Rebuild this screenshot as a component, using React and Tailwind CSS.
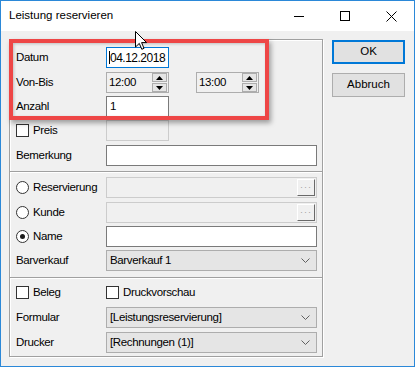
import React from 'react';

const Check = () => (
  <span className="block w-[13px] h-[13px] border border-[#333333] bg-white shrink-0" />
);

const Radio = ({ checked }) => (
  <span className="flex w-[13px] h-[13px] rounded-full border border-[#333333] bg-white items-center justify-center shrink-0">
    {checked && <span className="block w-[5px] h-[5px] rounded-full bg-[#1a1a1a]" />}
  </span>
);

const Chevron = () => (
  <svg width="9" height="5" viewBox="0 0 9 5" className="shrink-0">
    <path d="M0.5 0.5 L4.5 4.5 L8.5 0.5" stroke="#606060" fill="none" />
  </svg>
);

const Row = ({ label, children, className = '' }) => (
  <div className={`flex items-center h-[21px] ${className}`}>
    <div className="w-[90px] flex items-center shrink-0">{label}</div>
    {children}
  </div>
);

const Spinner = ({ value }) => (
  <div className="flex w-[63px] h-[21px] border border-[#adadad] bg-[#f0f0f0]">
    <div className="flex-1 flex items-center pl-[2px]">{value}</div>
    <div className="flex flex-col gap-[1px] w-[15px] mr-[1px]">
      <div className="h-[9px] border border-[#adadad] bg-[#e5e5e5] flex items-center justify-center">
        <svg width="7" height="4" viewBox="0 0 7 4"><path d="M3.5 0 L7 4 L0 4 Z" fill="#000" /></svg>
      </div>
      <div className="h-[9px] border border-[#adadad] bg-[#e5e5e5] flex items-center justify-center">
        <svg width="7" height="4" viewBox="0 0 7 4"><path d="M0 0 L7 0 L3.5 4 Z" fill="#000" /></svg>
      </div>
    </div>
  </div>
);

const Lookup = () => (
  <div className="flex items-center justify-end w-[211px] h-[21px] border border-[#cccccc] bg-[#f0f0f0]">
    <div className="w-[18px] h-[17px] mr-[1px] border border-t-white border-l-white border-b-[#696969] border-r-[#696969] bg-[#f0f0f0] flex items-center justify-center text-[#a0a0a0] text-[9px] tracking-[1px]">
      ···
    </div>
  </div>
);

const Select = ({ value }) => (
  <div className="flex items-center justify-between w-[211px] h-[21px] border border-[#adadad] bg-[#e5e5e5] pl-[3px] pr-[6px]">
    <span>{value}</span>
    <Chevron />
  </div>
);

export default function App() {
  return (
    <div className="relative w-[415px] h-[367px] border border-[#2b88d8] bg-[#f0f0f0] text-[11.5px] leading-none tracking-[-0.35px] text-black font-['Liberation_Sans',Arial,sans-serif] overflow-hidden">
      {/* Title bar */}
      <div className="flex items-center h-[30px] bg-white">
        <div className="flex-1 pl-[8px] text-[11.5px] tracking-normal">Leistung reservieren</div>
        <div className="flex">
          <div className="w-[46px] h-[30px] flex items-center justify-center">
            <div className="w-[10px] h-[1px] bg-black" />
          </div>
          <div className="w-[46px] h-[30px] flex items-center justify-center">
            <div className="w-[10px] h-[10px] border border-black" />
          </div>
          <div className="w-[46px] h-[30px] flex items-center justify-center">
            <svg width="11" height="11" viewBox="0 0 11 11">
              <path d="M0.5 0.5 L10.5 10.5 M10.5 0.5 L0.5 10.5" stroke="#000" strokeWidth="1" />
            </svg>
          </div>
        </div>
      </div>

      {/* Body */}
      <div className="flex">
        {/* Group box */}
        <div className="ml-[8px] mt-[8px] w-[314px] border border-[#a0a0a0] shadow-[inset_1px_1px_0_#ffffff,1px_1px_0_#ffffff] flex flex-col">
          <div className="pl-[6px] pt-[7px] pb-[5px]">
            <Row label="Datum">
              <div className="flex items-center w-[63px] h-[21px] border border-[#0078d7] bg-white pl-[2px]">
                <span className="block w-[1px] h-[13px] bg-black" />
                <span className="text-[12px] tracking-[-0.5px]">04.12.2018</span>
              </div>
            </Row>
            <Row label="Von-Bis" className="mt-[4px]">
              <Spinner value="12:00" />
              <div className="ml-[27px]">
                <Spinner value="13:00" />
              </div>
            </Row>
            <Row label="Anzahl" className="mt-[3px]">
              <div className="flex items-center w-[63px] h-[21px] border border-[#7a7a7a] bg-white pl-[3px]">1</div>
            </Row>
            <Row
              className="mt-[3px]"
              label={
                <>
                  <Check />
                  <span className="ml-[4px]">Preis</span>
                </>
              }
            >
              <div className="w-[63px] h-[21px] border border-[#cccccc] bg-[#f0f0f0]" />
            </Row>
            <Row label="Bemerkung" className="mt-[4px]">
              <div className="w-[211px] h-[21px] border border-[#7a7a7a] bg-white" />
            </Row>
          </div>

          <div className="h-[2px] border-t border-[#a0a0a0] bg-white" />

          <div className="pl-[6px] pt-[4px] pb-[6px]">
            <Row
              label={
                <>
                  <Radio />
                  <span className="ml-[4px]">Reservierung</span>
                </>
              }
            >
              <Lookup />
            </Row>
            <Row
              className="mt-[4px]"
              label={
                <>
                  <Radio />
                  <span className="ml-[4px]">Kunde</span>
                </>
              }
            >
              <Lookup />
            </Row>
            <Row
              className="mt-[3px]"
              label={
                <>
                  <Radio checked />
                  <span className="ml-[4px]">Name</span>
                </>
              }
            >
              <div className="w-[211px] h-[21px] border border-[#7a7a7a] bg-white" />
            </Row>
            <Row label="Barverkauf" className="mt-[3px]">
              <Select value="Barverkauf 1" />
            </Row>
          </div>

          <div className="h-[2px] border-t border-[#a0a0a0] bg-white" />

          <div className="pl-[6px] pt-[3px] pb-[3px]">
            <Row
              label={
                <>
                  <Check />
                  <span className="ml-[4px]">Beleg</span>
                </>
              }
            >
              <Check />
              <span className="ml-[4px]">Druckvorschau</span>
            </Row>
            <Row label="Formular" className="mt-[4px]">
              <Select value="[Leistungsreservierung]" />
            </Row>
            <Row label="Drucker" className="mt-[4px]">
              <Select value="[Rechnungen (1)]" />
            </Row>
          </div>
        </div>

        {/* Buttons */}
        <div className="ml-[9px] mt-[9px] flex flex-col gap-[9px]">
          <button className="w-[73px] h-[24px] border-2 border-[#0078d7] bg-[#e1e1e1] flex items-center justify-center tracking-normal">
            OK
          </button>
          <button className="w-[73px] h-[24px] border border-[#adadad] bg-[#e1e1e1] flex items-center justify-center tracking-normal">
            Abbruch
          </button>
        </div>
      </div>

      {/* Highlight annotation */}
      <div className="absolute left-[8px] top-[38px] w-[260px] h-[81px] border-4 border-[#ee4646] shadow-[2px_3px_5px_rgba(0,0,0,0.35),inset_1px_1px_3px_rgba(0,0,0,0.2)] pointer-events-none" />

      {/* Mouse cursor */}
      <svg className="absolute left-[134px] top-[30px]" width="13" height="20" viewBox="0 0 13 20">
        <path d="M0.5 0.5 L0.5 16 L4.3 12.4 L6.8 18.3 L9 17.3 L6.6 11.6 L11.6 11.6 Z" fill="#ffffff" stroke="#000000" strokeWidth="1" strokeLinejoin="miter" />
      </svg>
    </div>
  );
}
